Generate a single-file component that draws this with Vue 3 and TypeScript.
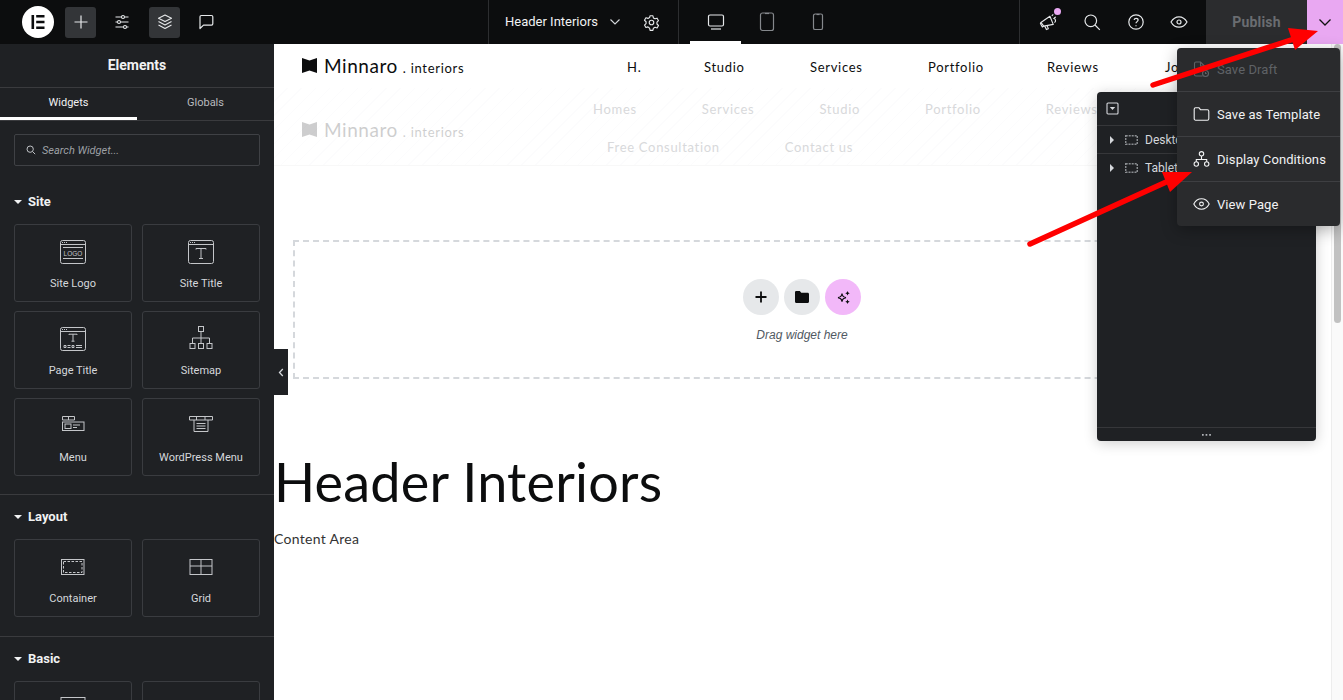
<script setup lang="ts">
interface Widget { name: string; icon: string }
const site: Widget[] = [
  { name: 'Site Logo', icon: 'logo' },
  { name: 'Site Title', icon: 'title' },
  { name: 'Page Title', icon: 'page' },
  { name: 'Sitemap', icon: 'sitemap' },
  { name: 'Menu', icon: 'menu' },
  { name: 'WordPress Menu', icon: 'wpmenu' },
]
const layout: Widget[] = [
  { name: 'Container', icon: 'container' },
  { name: 'Grid', icon: 'grid' },
]
const basic: Widget[] = [
  { name: '', icon: 'basic1' },
  { name: '', icon: 'basic2' },
]
const navLinks = ['H.', 'Studio', 'Services', 'Portfolio', 'Reviews', 'Jo']
const sections = [
  { title: 'Site', items: site },
  { title: 'Layout', items: layout },
  { title: 'Basic', items: basic },
]
</script>

<template>
  <div class="app">
    <header class="topbar">
      <div class="tb-left">
        <div class="e-logo">
          <svg width="18" height="18" viewBox="0 0 18 18"><path fill="#0c0d0e" d="M2.500 2h2.600v14H2.500zM7.200 2h8.300v2.600H7.200zM7.200 7.700h8.300v2.600H7.200zM7.200 13.400h8.300V16H7.200z"/></svg>
        </div>
        <button class="tb-btn active">
          <svg width="16" height="16" viewBox="0 0 16 16" fill="none" stroke="#e6e8ea" stroke-width="1.200"><path d="M8 1.500v13M1.500 8h13"/></svg>
        </button>
        <button class="tb-btn wide">
          <svg width="18" height="18" viewBox="0 0 18 18" fill="none" stroke="#e6e8ea" stroke-width="1.100"><path d="M2.500 4h6M11.500 4h4M2.500 9h2M7.500 9h8M2.500 14h8M13.500 14h2"/><circle cx="10" cy="4" r="1.500"/><circle cx="6" cy="9" r="1.500"/><circle cx="12" cy="14" r="1.500"/></svg>
        </button>
        <button class="tb-btn active">
          <svg width="18" height="18" viewBox="0 0 18 18" fill="none" stroke="#e6e8ea" stroke-width="1.100" stroke-linejoin="round"><path d="M9 2l6.500 3.300L9 8.600 2.500 5.300z"/><path d="M2.500 8.600L9 12l6.500-3.400M2.500 11.900L9 15.500l6.500-3.600"/></svg>
        </button>
        <button class="tb-btn">
          <svg width="18" height="18" viewBox="0 0 18 18" fill="none" stroke="#e6e8ea" stroke-width="1.200" stroke-linejoin="round"><path d="M3 3.800C3 3 3.600 2.500 4.300 2.500h10.200c.7 0 1.300.5 1.300 1.300v7c0 .8-.6 1.300-1.300 1.300H6.500L3 15.500z"/></svg>
        </button>
      </div>
      <div class="tb-doc">
        <span class="doc-name">Header Interiors</span>
        <svg class="doc-chev" width="12" height="8" viewBox="0 0 12 8" fill="none" stroke="#d5d8dc" stroke-width="1.100"><path d="M1.500 1.500L6 6l4.500-4.500"/></svg>
        <svg width="17" height="17" viewBox="0 0 24 24" fill="none" stroke="#e6e8ea" stroke-width="1.600" stroke-linejoin="round"><circle cx="12" cy="12" r="3.200"/><path d="M10 2.500h4l.7 3 2.300 1.300 2.900-.9 2 3.500-2.200 2.100v2.600l2.200 2.100-2 3.500-2.900-.9-2.300 1.300-.7 3h-4l-.7-3L7 18.200l-2.900.9-2-3.500 2.200-2.100v-2.600L2.100 8.800l2-3.500 2.900.9 2.300-1.300z"/></svg>
      </div>
      <div class="tb-devices">
        <button class="dev on">
          <svg width="18" height="18" viewBox="0 0 18 18" fill="none" stroke="#e6e8ea" stroke-width="1.200"><rect x="1.500" y="2" width="15" height="11" rx="1.500"/><path d="M4 16h10"/></svg>
        </button>
        <button class="dev">
          <svg width="16" height="20" viewBox="0 0 16 20" fill="none" stroke="#85888c" stroke-width="1.200"><rect x="1.500" y="1" width="13" height="17.500" rx="2"/><path d="M6 1.500h4"/></svg>
        </button>
        <button class="dev">
          <svg width="12" height="18" viewBox="0 0 12 18" fill="none" stroke="#85888c" stroke-width="1.200"><rect x="1.500" y="1" width="9" height="15.500" rx="1.600"/><path d="M4.500 1.500h3"/></svg>
        </button>
      </div>
      <div class="tb-right">
        <div class="tb-tools">
          <span class="tool">
            <svg width="20" height="20" viewBox="0 0 20 20" fill="none" stroke="#e6e8ea" stroke-width="1.200" stroke-linejoin="round"><path d="M2 10.500L11.500 4l3.500 8.500-10 1.800z"/><path d="M2 10.500l-.5 1 2 3.800 1.500-1M6 14.200l1.800 3.800 2-1-1.300-3.200M15 6c1.500.2 2.300 1.200 2.400 2.300.1 1-.4 1.900-1.200 2.300M13.500 3.500L15 2M16 5.500l1.800-.8"/></svg>
            <i class="dot"></i>
          </span>
          <span class="tool">
            <svg width="18" height="18" viewBox="0 0 18 18" fill="none" stroke="#e6e8ea" stroke-width="1.200"><circle cx="7.800" cy="7.800" r="5.800"/><path d="M12 12l4.800 4.800"/></svg>
          </span>
          <span class="tool">
            <svg width="18" height="18" viewBox="0 0 18 18" fill="none" stroke="#e6e8ea" stroke-width="1.200"><circle cx="9" cy="9" r="7.200"/><path d="M7.100 7c.2-1.100 1-1.700 2-1.700 1.100 0 2 .7 2 1.800 0 1.500-2.100 1.600-2.100 3.200"/><path d="M9 12.200v1"/></svg>
          </span>
          <span class="tool">
            <svg width="18" height="18" viewBox="0 0 18 18" fill="none" stroke="#e6e8ea" stroke-width="1.200"><path d="M1 9C3 5.500 5.700 3.800 9 3.800s6 1.700 8 5.200c-2 3.500-4.700 5.200-8 5.200S3 12.500 1 9z"/><circle cx="9" cy="9" r="2"/></svg>
          </span>
        </div>
        <div class="publish">Publish</div>
        <div class="publish-more">
          <svg width="14" height="9" viewBox="0 0 14 9" fill="none" stroke="#111" stroke-width="1.300"><path d="M1.500 1.500L7 7l5.500-5.500"/></svg>
        </div>
      </div>
    </header>

    <div class="main">
      <aside class="sidebar">
        <div class="side-title">Elements</div>
        <div class="tabs">
          <div class="tab on">Widgets</div>
          <div class="tab">Globals</div>
        </div>
        <div class="search-wrap">
          <div class="search">
            <svg width="10" height="10" viewBox="0 0 12 12" fill="none" stroke="#bfc2c6" stroke-width="1.200"><circle cx="5" cy="5" r="3.800"/><path d="M8 8l3 3"/></svg>
            <span>Search Widget...</span>
          </div>
        </div>
        <section v-for="s in sections" :key="s.title" class="cat">
          <h3 class="cat-title"><i class="caret"></i>{{ s.title }}</h3>
          <div class="cards">
            <div v-for="w in s.items" :key="w.icon" class="card">
              <svg class="ico" width="30" height="30" viewBox="0 0 30 30" fill="none" stroke="#c4c6c9" stroke-width="1">
                <template v-if="w.icon === 'logo'">
                  <rect x="2.500" y="3.500" width="25" height="23" rx="2"/><path d="M2.500 7.500h25M5 10.500h20M5 21.500h20"/><path d="M4 5.500h5" stroke-dasharray="1 1"/>
                  <text x="15" y="18.500" font-size="6.500" text-anchor="middle" fill="#c4c6c9" stroke="none" font-family="Liberation Sans">LOGO</text>
                </template>
                <template v-else-if="w.icon === 'title'">
                  <rect x="2.500" y="3.500" width="25" height="23" rx="2"/><path d="M2.500 7.500h25"/><path d="M4 5.500h5" stroke-dasharray="1 1"/>
                  <path d="M10 12.500v-1h10v1M15 11.500v10M13 21.500h4"/>
                </template>
                <template v-else-if="w.icon === 'page'">
                  <rect x="2.500" y="3.500" width="25" height="23" rx="2"/><path d="M2.500 7.500h25"/><path d="M4 5.500h5" stroke-dasharray="1 1"/>
                  <path d="M11 11v-.8h8v.8M15 10.200v7M13.500 17.200h3"/><path d="M6 21.500h2v2H6zM14 21.500h2v2h-2zM9.500 21.500h3M9.500 23.500h3M18 21.500h6M18 23.500h6"/>
                </template>
                <template v-else-if="w.icon === 'sitemap'">
                  <rect x="12.500" y="2.500" width="5" height="5"/><rect x="4" y="19.500" width="5" height="5"/><rect x="12.500" y="19.500" width="5" height="5"/><rect x="21" y="19.500" width="5" height="5"/><path d="M15 7.500v12M6.500 19.500v-5.500h17v5.500"/>
                </template>
                <template v-else-if="w.icon === 'menu'">
                  <path d="M4.500 5.500h12v3.500h-12zM10.500 5.500v3.500"/><rect x="4.500" y="11" width="21.500" height="8.500"/><rect x="7" y="13" width="6" height="4.500"/><path d="M15 14h7M15 16.500h4"/>
                </template>
                <template v-else-if="w.icon === 'wpmenu'">
                  <path d="M3.500 5.500h23v3.500h-23zM10.500 5.500v3.500M19 5.500v3.500"/><path d="M8 9v11.500h14V9"/><path d="M10.500 12.500h9M10.500 15h9M10.500 17.500h9"/>
                </template>
                <template v-else-if="w.icon === 'container'">
                  <rect x="3.500" y="7.500" width="22.500" height="15"/><rect x="5.500" y="9.500" width="18.500" height="11" stroke-dasharray="2.500 1.500"/>
                </template>
                <template v-else-if="w.icon === 'grid'">
                  <rect x="4" y="7.500" width="22" height="15"/><path d="M15 7.500v15M4 14h22"/>
                </template>
                <template v-else-if="w.icon === 'basic1'">
                  <rect x="3" y="3.500" width="24" height="20"/><path d="M3 7.500h24"/>
                </template>
              </svg>
              <span v-if="w.name" class="label">{{ w.name }}</span>
            </div>
          </div>
        </section>
      </aside>

      <main class="canvas">
        <div class="site-head">
          <div class="brand">
            <svg class="brand-mark" width="15" height="15" viewBox="0 0 15 15"><path fill="currentColor" d="M0 0l7.500 2.500L15 0v15l-7.500-2.500L0 15z"/></svg>
            <span class="brand-name">Minnaro</span>
            <span class="brand-sub">. interiors</span>
          </div>
          <nav class="nav">
            <a v-for="l in navLinks" :key="l">{{ l }}</a>
          </nav>
        </div>
        <div class="ghost">
          <div class="brand ghost-brand">
            <svg class="brand-mark" width="15" height="15" viewBox="0 0 15 15"><path fill="currentColor" d="M0 0l7.500 2.500L15 0v15l-7.500-2.500L0 15z"/></svg>
            <span class="brand-name">Minnaro</span>
            <span class="brand-sub">. interiors</span>
          </div>
          <div class="ghost-links">
            <div class="g-row g-row1"><a>Homes</a><a>Services</a><a>Studio</a><a>Portfolio</a><a>Reviews</a></div>
            <div class="g-row g-row2"><a>Free Consultation</a><a>Contact us</a></div>
          </div>
        </div>
        <div class="drop">
          <div class="drop-btns">
            <span class="round">
              <svg width="12" height="12" viewBox="0 0 12 12" fill="none" stroke="#0c0d0e" stroke-width="1.800"><path d="M6 .5v11M.5 6h11"/></svg>
            </span>
            <span class="round">
              <svg width="14" height="12" viewBox="0 0 14 12"><path fill="#0c0d0e" d="M0 1.300C0 .6.500 0 1.200 0h3.600l1.500 1.700h6.300c.8 0 1.400.6 1.400 1.300v7.500c0 .8-.6 1.500-1.400 1.500H1.300C.6 12 0 11.300 0 10.500z"/></svg>
            </span>
            <span class="round pink">
              <svg width="15" height="15" viewBox="0 0 15 15" fill="none" stroke="#0c0d0e" stroke-width="1.200"><path d="M6 3.500C6.300 6.300 7.200 7.200 10 7.600 7.200 8 6.300 8.900 6 11.700 5.700 8.900 4.800 8 2 7.600 4.800 7.200 5.700 6.300 6 3.500z"/><path fill="#0c0d0e" stroke="none" d="M11.500 1l.7 1.500 1.500.7-1.500.7-.7 1.500-.7-1.500-1.500-.7 1.500-.7zM11.500 9.500l.7 1.500 1.500.7-1.500.7-.7 1.500-.7-1.500-1.500-.7 1.500-.7z"/></svg>
            </span>
          </div>
          <div class="drop-text">Drag widget here</div>
        </div>
        <h1 class="page-title">Header Interiors</h1>
        <p class="content">Content Area</p>
      </main>

      <div class="scrollbar"><i></i></div>
    </div>

    <div class="collapse">
      <svg width="6" height="9" viewBox="0 0 6 9" fill="none" stroke="#d5d8dc" stroke-width="1.300"><path d="M4.800 1L1.500 4.500 4.800 8"/></svg>
    </div>

    <div class="navigator">
      <div class="nav-head">
        <svg width="13" height="13" viewBox="0 0 13 13" fill="none" stroke="#d5d8dc" stroke-width="1.100"><rect x="1" y="1" width="11" height="11" rx="1"/><path fill="#d5d8dc" stroke="none" d="M3.800 5h5.400L6.500 8z"/></svg>
      </div>
      <div class="nav-row">
        <i class="tri"></i>
        <svg width="13" height="10" viewBox="0 0 13 10" fill="none" stroke="#8a8d91" stroke-width="1.500" stroke-dasharray="2 1"><rect x=".7" y=".7" width="11.600" height="8.600"/></svg>
        <span>Desktop</span>
      </div>
      <div class="nav-row last">
        <i class="tri"></i>
        <svg width="13" height="10" viewBox="0 0 13 10" fill="none" stroke="#8a8d91" stroke-width="1.500" stroke-dasharray="2 1"><rect x=".7" y=".7" width="11.600" height="8.600"/></svg>
        <span>Tablet</span>
      </div>
      <div class="nav-foot">
        <svg width="9" height="2" viewBox="0 0 9 2"><path fill="#b0b3b7" d="M0 0h1.700v1.700H0zM3.600 0h1.700v1.700H3.600zM7.200 0h1.700v1.700H7.200z"/></svg>
      </div>
    </div>

    <div class="menu">
      <div class="mi disabled">
        <svg width="16" height="17" viewBox="0 0 16 17" fill="none" stroke="currentColor" stroke-width="1.100"><path d="M9 15H2.500C1.700 15 1 14.300 1 13.500v-11C1 1.700 1.700 1 2.500 1H7l4 4v3"/><path d="M7 1v4h4"/><circle cx="12" cy="12.500" r="3"/><path d="M12 11v1.500h1.200"/></svg>
        <span>Save Draft</span>
      </div>
      <div class="mi tall">
        <svg width="16" height="14" viewBox="0 0 16 14" fill="none" stroke="currentColor" stroke-width="1.100" stroke-linejoin="round"><path d="M.7 2.200C.7 1.300 1.300.8 2.100.8h3.500l1.500 2h6.800c.8 0 1.400.6 1.400 1.400v7.500c0 .8-.6 1.500-1.400 1.500H2.100c-.8 0-1.400-.7-1.400-1.500z"/></svg>
        <span>Save as Template</span>
      </div>
      <div class="mi tall">
        <svg width="16" height="16" viewBox="0 0 16 16" fill="none" stroke="currentColor" stroke-width="1.100"><circle cx="8" cy="2.800" r="2.200"/><circle cx="2.800" cy="13" r="2.200"/><circle cx="13.200" cy="13" r="2.200"/><path d="M8 5v3.500M2.800 10.800V8.500h10.400v2.300"/></svg>
        <span>Display Conditions</span>
      </div>
      <div class="mi">
        <svg width="17" height="12" viewBox="0 0 17 12" fill="none" stroke="currentColor" stroke-width="1.100"><path d="M.8 6C2.600 2.600 5.200.8 8.500.8S14.400 2.600 16.200 6c-1.800 3.400-4.400 5.200-7.700 5.200S2.600 9.400.8 6z"/><circle cx="8.500" cy="6" r="1.900"/></svg>
        <span>View Page</span>
      </div>
    </div>

    <svg class="arrows" width="1343" height="700" viewBox="0 0 1343 700">
      <g fill="#ff0000" stroke="#ff0000" stroke-linecap="round">
        <path d="M1153 85L1300 37" stroke-width="5.500" fill="none"/>
        <path d="M1318 31L1288 28L1295 50z" stroke="none"/>
        <path d="M1030 244L1175 178" stroke-width="5.500" fill="none"/>
        <path d="M1192 172L1162 172L1170 192z" stroke="none"/>
      </g>
    </svg>
  </div>
</template>

<style>
html, body { margin: 0; padding: 0; background: #fff; overflow: hidden; }
</style>

<style scoped>
.app { position: relative; width: 1343px; height: 700px; overflow: hidden; display: flex; flex-direction: column; font-family: Roboto, "Liberation Sans", sans-serif; color: #e6e8ea; }
button { border: 0; background: none; padding: 0; display: flex; align-items: center; justify-content: center; }
.topbar { height: 44px; flex: none; background: #0c0d0e; display: flex; }
.tb-left { width: 488px; flex: none; display: flex; align-items: center; padding-left: 22px; box-sizing: border-box; }
.e-logo { width: 32px; height: 32px; border-radius: 50%; background: #fff; display: flex; align-items: center; justify-content: center; margin-right: 11px; }
.tb-btn { width: 31px; height: 31px; border-radius: 3px; margin-right: 10px; flex: none; }
.tb-btn.wide { margin-right: 12px; }
.tb-btn.active { background: #333538; }
.tb-doc { width: 190px; flex: none; box-sizing: border-box; border-left: 1px solid #2d2e30; display: flex; align-items: center; padding-left: 16px; font-size: 13px; color: #f1f2f3; }
.doc-name { margin-right: 11px; margin-top: -1px; white-space: nowrap; }
.doc-chev { margin-right: 22px; }
.tb-devices { width: 176px; flex: none; box-sizing: border-box; border-left: 1px solid #2d2e30; display: flex; padding-left: 11px; }
.dev { width: 51px; height: 44px; box-sizing: border-box; }
.dev.on { border-bottom: 3px solid #fff; padding-top: 3px; }
.tb-right { flex: 1; border-left: 1px solid #2d2e30; margin-left: 165px; display: flex; }
.tb-tools { width: 186px; flex: none; display: flex; align-items: center; padding-left: 19px; gap: 24.500px; box-sizing: border-box; }
.tool { position: relative; display: flex; width: 19px; justify-content: center; }
.dot { position: absolute; top: -4px; right: -3px; width: 7px; height: 7px; border-radius: 50%; background: #e9a8f2; }
.publish { width: 101px; flex: none; background: #2b2c2e; color: #6a6d71; font-size: 14px; font-weight: 700; letter-spacing: .2px; display: flex; align-items: center; justify-content: center; }
.publish-more { flex: 1; background: #e9a8f2; display: flex; align-items: center; justify-content: center; }
.main { flex: 1; display: flex; min-height: 0; background: #fff; }
.sidebar { width: 274px; flex: none; background: #1f2124; overflow: hidden; }
.side-title { height: 44px; box-sizing: border-box; padding-bottom: 2px; display: flex; align-items: center; justify-content: center; font-size: 14px; font-weight: 700; color: #f1f2f3; border-bottom: 1px solid #3a3b3e; }
.tabs { display: flex; height: 32px; border-bottom: 1px solid #3a3b3e; }
.tab { width: 138px; display: flex; align-items: center; justify-content: center; font-size: 11px; color: #b8babe; box-sizing: border-box; padding-bottom: 3px; }
.tab.on { color: #f1f2f3; border-bottom: 3px solid #fff; padding-bottom: 0; }
.search-wrap { padding: 13px 14px 0; }
.search { height: 32px; border: 1px solid #3f4145; border-radius: 2px; display: flex; align-items: center; gap: 6px; padding-left: 11px; box-sizing: border-box; font-size: 11px; font-style: italic; color: #9da0a4; }
.cat { padding: 13px 14px 19px; border-bottom: 1px solid #3a3b3e; }
.cat:nth-of-type(1) { padding-top: 27px; padding-bottom: 18px; }
.cat-title { margin: 0 0 13px; font-size: 13px; line-height: 18px; font-weight: 700; color: #f1f2f3; display: flex; align-items: center; gap: 6px; }
.caret { width: 0; height: 0; border: 4px solid transparent; border-top: 4px solid #f1f2f3; border-bottom: 0; }
.cards { display: grid; grid-template-columns: 118px 118px; column-gap: 10px; row-gap: 9px; }
.card { height: 78px; box-sizing: border-box; border: 1px solid #3a3c40; border-radius: 3px; display: flex; flex-direction: column; align-items: center; padding-top: 12px; }
.ico { display: block; }
.label { margin-top: 10px; font-size: 11px; color: #d5d8dc; white-space: nowrap; }
.canvas { flex: 1; min-width: 0; color: #0c0d0e; overflow: hidden; }
.site-head { height: 44px; position: relative; display: flex; }
.brand { display: flex; align-items: center; font-family: Lato, sans-serif; }
.site-head .brand { position: absolute; left: 28px; top: 10px; }
.brand-mark { margin-right: 7px; color: #0c0d0e; }
.brand-name { font-size: 19px; letter-spacing: .55px; }
.brand-sub { font-size: 13px; letter-spacing: .7px; margin-left: 5px; padding-top: 5px; }
.nav { position: absolute; left: 353px; top: 15px; display: flex; font-family: Lato, sans-serif; font-size: 13px; letter-spacing: .7px; }
.nav a:nth-child(1) { width: 77px; }
.nav a:nth-child(2) { width: 106px; }
.nav a:nth-child(3) { width: 118px; }
.nav a:nth-child(4) { width: 119px; }
.nav a:nth-child(5) { width: 118px; }
.ghost { height: 78px; position: relative; box-sizing: border-box; border-bottom: 1px solid #f8f8f8; background: repeating-linear-gradient(135deg, #fff 0 9px, #fcfcfd 9px 10px); font-family: Lato, sans-serif; }
.ghost-brand { position: absolute; left: 28px; top: 30px; opacity: .2; }
.ghost-links { color: #d8d9db; font-size: 13px; letter-spacing: .7px; }
.g-row { position: absolute; display: flex; white-space: nowrap; }
.g-row1 { left: 319px; top: 13px; gap: 65px; }
.g-row2 { left: 333px; top: 51px; gap: 65px; }
.drop { margin: 74px 18px 0 19px; width: 1018px; height: 139px; box-sizing: border-box; border: 2px dashed #d5d8dc; display: flex; flex-direction: column; align-items: center; padding-top: 37px; }
.drop-btns { display: flex; gap: 5px; }
.round { width: 36px; height: 36px; border-radius: 50%; background: #e6e8ea; display: flex; align-items: center; justify-content: center; }
.round.pink { background: #f2b8f9; }
.drop-text { margin-top: 13px; font: italic 12px "Liberation Sans", sans-serif; color: #515962; }
.page-title { margin: 71px 0 0; font: 400 54px/1.200 Lato, sans-serif; letter-spacing: .2px; color: #0c0d0e; }
.content { margin: 14px 0 0; font: 400 14px/20px Lato, sans-serif; letter-spacing: .3px; color: #333; }
.scrollbar { width: 12px; flex: none; background: #fafafa; border-left: 1px solid #ededed; box-sizing: border-box; padding: 0 2px; }
.scrollbar i { display: block; width: 7px; height: 279px; border-radius: 4px; background: #c1c1c1; }
.collapse { position: absolute; left: 274px; top: 349px; width: 14px; height: 46px; background: #1f2124; display: flex; align-items: center; justify-content: center; }
.navigator { position: absolute; left: 1097px; top: 92px; width: 219px; height: 349px; box-sizing: border-box; background: #1f2124; border-radius: 4px; box-shadow: 0 2px 14px rgba(0,0,0,.2); display: flex; flex-direction: column; font-size: 12px; color: #d5d8dc; }
.nav-head { height: 34px; box-sizing: border-box; border-bottom: 1px solid #36373a; display: flex; align-items: center; padding-left: 9px; flex: none; }
.nav-row { height: 28px; box-sizing: border-box; flex: none; border-bottom: 1px solid #36373a; display: flex; align-items: center; padding-left: 13px; white-space: nowrap; }
.nav-row.last { border-bottom: 0; }
.nav-row svg { margin-right: 7px; }
.tri { width: 0; height: 0; border: 4px solid transparent; border-left: 4px solid #d5d8dc; border-right: 0; margin-right: 11px; }
.nav-foot { margin-top: auto; height: 13px; border-top: 1px solid #36373a; display: flex; align-items: center; justify-content: center; }
.menu { position: absolute; left: 1177px; top: 48px; width: 163px; height: 178px; background: #2a2b2d; border-radius: 4px; box-shadow: 0 4px 16px rgba(0,0,0,.3); display: flex; flex-direction: column; }
.mi { height: 44px; flex: none; box-sizing: border-box; display: flex; align-items: center; padding-left: 16px; font-size: 13px; letter-spacing: .08px; color: #f1f2f3; border-bottom: 1px solid #3e3f42; }
.mi.tall { height: 45px; }
.mi:last-child { border-bottom: 0; }
.mi svg { width: 17px; flex: none; margin-right: 7px; }
.mi.disabled { color: #5f6266; }
.arrows { position: absolute; left: 0; top: 0; pointer-events: none; }
</style>
